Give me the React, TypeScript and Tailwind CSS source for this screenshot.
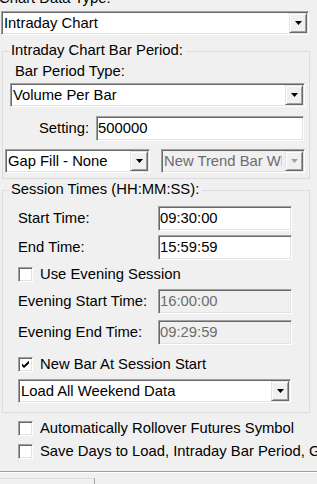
const sunken =
  'border border-t-[#a0a0a0] border-l-[#a0a0a0] border-r-white border-b-white shadow-[inset_1px_1px_0_#696969,inset_-1px_-1px_0_#e3e3e3]';
const raised =
  'border border-t-[#e3e3e3] border-l-[#e3e3e3] border-r-[#696969] border-b-[#696969] shadow-[inset_1px_1px_0_#fff,inset_-1px_-1px_0_#a0a0a0] bg-[#f0f0f0]';

function Combo({ text, className = '', disabled = false }: { text: string; className?: string; disabled?: boolean }) {
  return (
    <div className={`flex items-center h-[24px] ${sunken} ${disabled ? 'bg-[#f0f0f0]' : 'bg-white'} ${className}`}>
      <span className={`flex-1 min-w-0 mr-[3px] overflow-hidden whitespace-nowrap pl-[2px] ${disabled ? 'text-[#6d6d6d]' : ''}`}>
        {text}
      </span>
      <div className={`w-[18px] h-[20px] mr-[1px] shrink-0 flex items-center justify-center ${raised}`}>
        <svg width="7" height="4" viewBox="0 0 7 4">
          <path d="M0 0h7L3.5 4z" fill={disabled ? '#a0a0a0' : '#000'} />
        </svg>
      </div>
    </div>
  );
}

function Field({ value, disabled = false }: { value: string; disabled?: boolean }) {
  return (
    <div
      className={`flex items-center h-[25px] pl-[1px] whitespace-nowrap ${sunken} ${
        disabled ? 'bg-[#f0f0f0] text-[#6d6d6d]' : 'bg-white'
      }`}
    >
      {value}
    </div>
  );
}

function Check({ checked = false }: { checked?: boolean }) {
  return (
    <div className={`w-[15px] h-[15px] shrink-0 bg-white flex items-center justify-center ${sunken}`}>
      {checked && (
        <svg width="7" height="7" viewBox="0 0 7 7">
          <path d="M0 2.5L2 4.5L7 -0.5V2.5L2 7L0 5Z" fill="#000" />
        </svg>
      )}
    </div>
  );
}

function CheckRow({ label, checked, className = '' }: { label: string; checked?: boolean; className?: string }) {
  return (
    <div className={`flex items-center h-[17px] whitespace-nowrap ${className}`}>
      <Check checked={checked} />
      <span className="ml-[7px]">{label}</span>
    </div>
  );
}

function TimeRow({ label, value, disabled, className = '' }: { label: string; value: string; disabled?: boolean; className?: string }) {
  return (
    <div className={`flex items-center h-[25px] ${className}`}>
      <span className="ml-[15px] w-[140px] whitespace-nowrap">{label}</span>
      <div className="w-[134px]">
        <Field value={value} disabled={disabled} />
      </div>
    </div>
  );
}

export default function App() {
  return (
    <div className="w-[317px] h-[484px] overflow-hidden bg-[#f0f0f0] text-black text-[14.8px] leading-[17px] [font-family:'Liberation_Sans',Arial,sans-serif]">
      <div className="-mt-[10px] -ml-[1px] h-[17px] whitespace-nowrap">Chart Data Type:</div>
      <Combo text="Intraday Chart" className="mt-[4px] ml-[1px] w-[308px]" />

      {/* Intraday Chart Bar Period group */}
      <div className="mt-[16px] ml-[2px] w-[308px] h-[128px] border border-[#dcdcdc]">
        <div className="-mt-[10px] ml-[6px] pl-[2px] pr-[3px] w-fit h-[17px] bg-[#f0f0f0] whitespace-nowrap">
          Intraday Chart Bar Period:
        </div>
        <div className="mt-[4px] ml-[12px] h-[17px]">Bar Period Type:</div>
        <Combo text="Volume Per Bar" className="mt-[3px] ml-[7px] w-[295px]" />
        <div className="mt-[9px] flex items-center h-[25px]">
          <span className="ml-[36px] w-[51px] whitespace-nowrap">Setting:</span>
          <div className="ml-[6px] w-[208px]">
            <Field value="500000" />
          </div>
        </div>
        <div className="mt-[8px] flex">
          <Combo text="Gap Fill - None" className="ml-[2px] w-[145px]" />
          <Combo text="New Trend Bar When Price Exceeds" disabled className="ml-[11px] w-[144px]" />
        </div>
      </div>

      {/* Session Times group */}
      <div className="mt-[11px] ml-[2px] w-[308px] h-[223px] border border-[#dcdcdc]">
        <div className="-mt-[10px] ml-[6px] pl-[2px] pr-[3px] w-fit h-[17px] bg-[#f0f0f0] whitespace-nowrap">
          Session Times (HH:MM:SS):
        </div>
        <TimeRow label="Start Time:" value="09:30:00" className="mt-[8px]" />
        <TimeRow label="End Time:" value="15:59:59" className="mt-[4px]" />
        <CheckRow label="Use Evening Session" className="mt-[6px] ml-[15px]" />
        <TimeRow label="Evening Start Time:" value="16:00:00" disabled className="mt-[6px]" />
        <TimeRow label="Evening End Time:" value="09:29:59" disabled className="mt-[6px]" />
        <CheckRow label="New Bar At Session Start" checked className="mt-[11px] ml-[15px]" />
        <Combo text="Load All Weekend Data" className="mt-[6px] ml-[15px] w-[273px]" />
      </div>

      <CheckRow label="Automatically Rollover Futures Symbol" className="mt-[7px] ml-[18px]" />
      <CheckRow label="Save Days to Load, Intraday Bar Period, Gap Fill Settings" className="mt-[6px] ml-[18px]" />

      <div className="mt-[11px] h-px bg-[#a0a0a0]" />
      <div className="h-px bg-white" />
      <div className="mt-[5px] w-[95px] h-[10px] border-t border-r border-t-[#dcdcdc] border-r-[#a0a0a0]" />
    </div>
  );
}
